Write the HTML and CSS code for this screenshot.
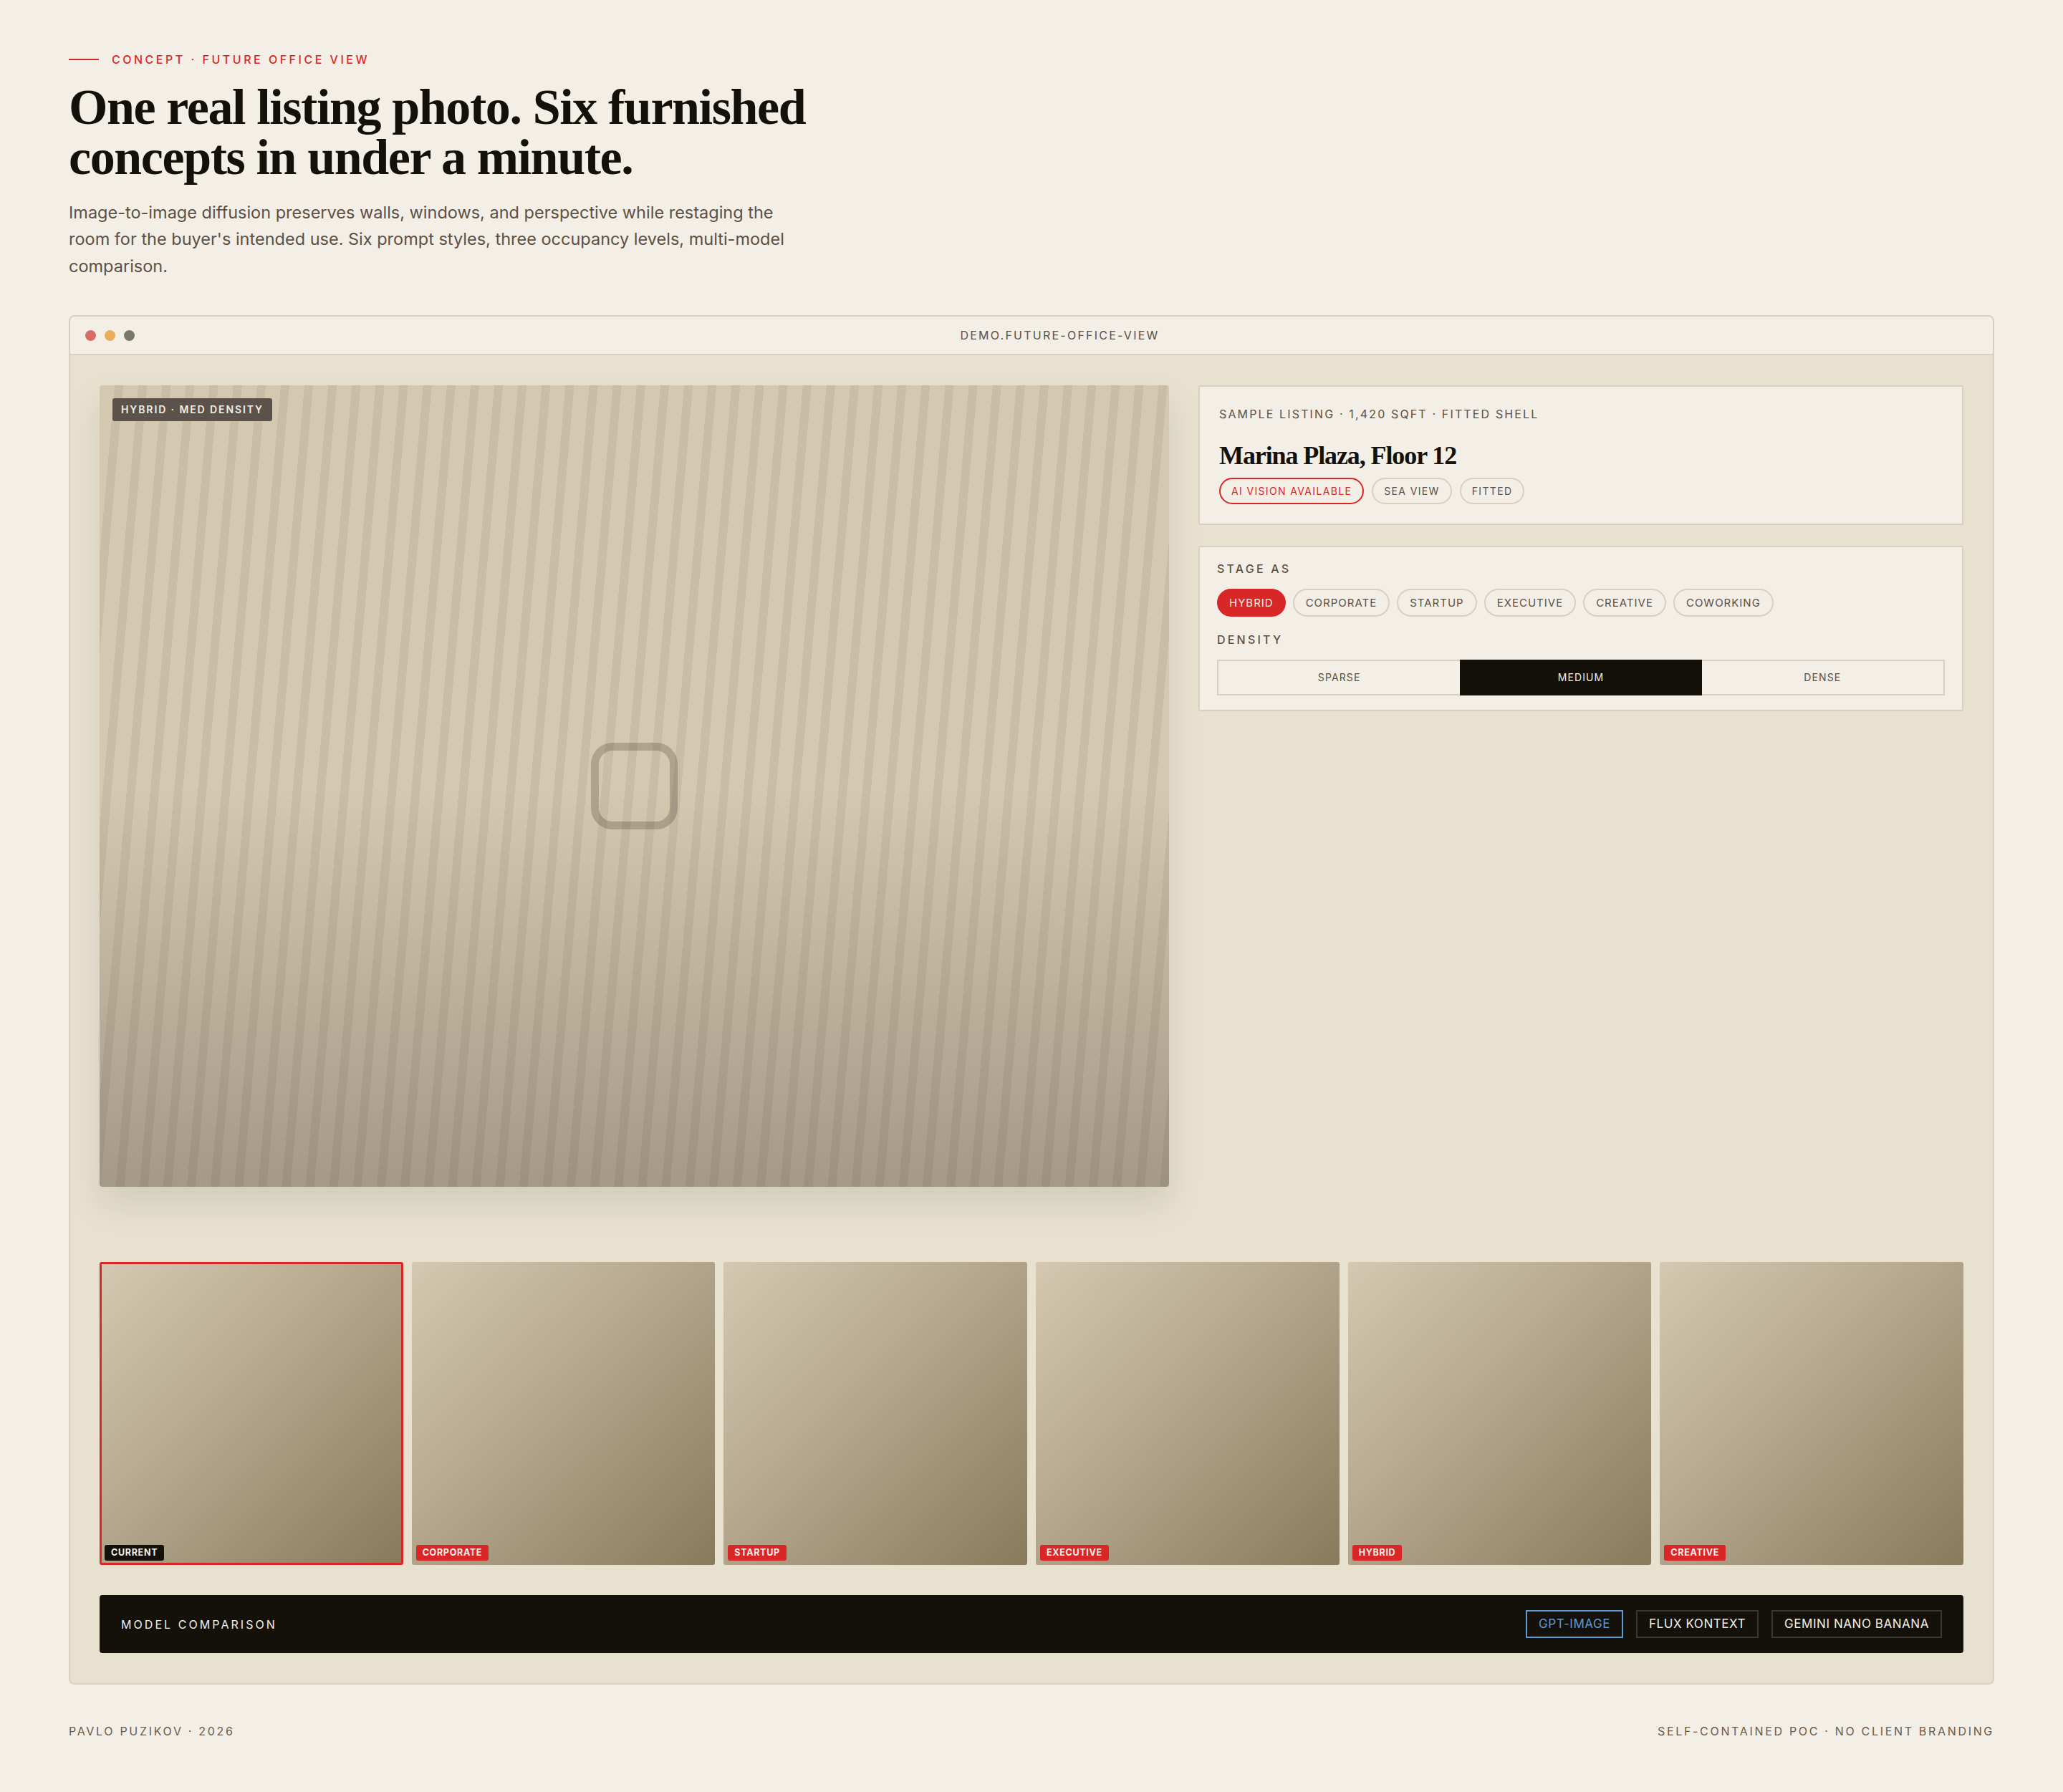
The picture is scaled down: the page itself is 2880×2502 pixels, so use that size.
FILE: index.html
```html
<!DOCTYPE html>
<html lang="en">
<head>
    <meta charset="UTF-8">
    <meta name="viewport" content="width=device-width, initial-scale=1.0">
    <title>Future Office View</title>
    <link rel="stylesheet" href="styles.css">
</head>
<body>

<div class="page">
    <header class="intro">
        <div class="eyebrow"><span class="eyebrow-line"></span>CONCEPT · FUTURE OFFICE VIEW</div>
        <h1>One real listing photo. Six furnished<br>concepts in under a minute.</h1>
        <p class="lead">Image-to-image diffusion preserves walls, windows, and perspective while restaging the room for the buyer's intended use. Six prompt styles, three occupancy levels, multi-model comparison.</p>
    </header>

    <section class="frame">
        <div class="titlebar">
            <div class="dots">
                <span class="dot dot-red"></span>
                <span class="dot dot-amber"></span>
                <span class="dot dot-grey"></span>
            </div>
            <div class="titlebar-url">DEMO.FUTURE-OFFICE-VIEW</div>
        </div>

        <div class="frame-body">
            <div class="stage">
                <div class="photo">
                    <span class="photo-badge">HYBRID · MED DENSITY</span>
                    <span class="photo-icon"></span>
                </div>

                <div class="side">
                    <div class="card listing">
                        <div class="listing-meta">SAMPLE LISTING · 1,420 SQFT · FITTED SHELL</div>
                        <h3>Marina Plaza, Floor 12</h3>
                        <div class="tags">
                            <span class="tag tag-red">AI VISION AVAILABLE</span>
                            <span class="tag">SEA VIEW</span>
                            <span class="tag">FITTED</span>
                        </div>
                    </div>

                    <div class="card controls">
                        <div class="control-label">STAGE AS</div>
                        <div class="chips">
                            <span class="chip chip-active">HYBRID</span>
                            <span class="chip">CORPORATE</span>
                            <span class="chip">STARTUP</span>
                            <span class="chip">EXECUTIVE</span>
                            <span class="chip">CREATIVE</span>
                            <span class="chip">COWORKING</span>
                        </div>
                        <div class="control-label density-label">DENSITY</div>
                        <div class="segments">
                            <span class="segment">SPARSE</span>
                            <span class="segment segment-active">MEDIUM</span>
                            <span class="segment">DENSE</span>
                        </div>
                    </div>
                </div>
            </div>

            <div class="thumbs">
                <div class="thumb thumb-current"><span class="thumb-label label-dark">CURRENT</span></div>
                <div class="thumb"><span class="thumb-label">CORPORATE</span></div>
                <div class="thumb"><span class="thumb-label">STARTUP</span></div>
                <div class="thumb"><span class="thumb-label">EXECUTIVE</span></div>
                <div class="thumb"><span class="thumb-label">HYBRID</span></div>
                <div class="thumb"><span class="thumb-label">CREATIVE</span></div>
            </div>

            <div class="models">
                <div class="models-title">MODEL COMPARISON</div>
                <div class="model-buttons">
                    <span class="model model-active">GPT-IMAGE</span>
                    <span class="model">FLUX KONTEXT</span>
                    <span class="model">GEMINI NANO BANANA</span>
                </div>
            </div>
        </div>
    </section>

    <footer>
        <span>PAVLO PUZIKOV · 2026</span>
        <span>SELF-CONTAINED POC · NO CLIENT BRANDING</span>
    </footer>
</div>

</body>
</html>
```

FILE: styles.css
```css
body {
    margin: 0;
    background: #f3eee6;
    color: #14100a;
    font-family: 'Inter', sans-serif;
}
.page {
    padding: 72px 96px 0;
}
.eyebrow {
    display: flex;
    align-items: center;
    gap: 18px;
    height: 22px;
    font-size: 16px;
    font-weight: 500;
    letter-spacing: 3.5px;
    color: #d92626;
}
.eyebrow-line {
    width: 42px;
    height: 2px;
    background: #d92626;
}
h1 {
    margin: 21px 0 0;
    font-family: 'Liberation Serif', serif;
    font-size: 70px;
    line-height: 70px;
    font-weight: 700;
    letter-spacing: -0.02em;
}
.lead {
    margin: 23px 0 0;
    width: 1010px;
    font-size: 23.5px;
    line-height: 37.4px;
    color: #5c5044;
}
.frame {
    margin-top: 50px;
    border: 2px solid #d9d0c0;
    border-radius: 8px;
    background: #e8e1d0;
}
.titlebar {
    display: flex;
    align-items: center;
    gap: 10px;
    height: 52px;
    padding: 0 21px;
    background: #f3eee6;
    border-bottom: 2px solid #d9d0c0;
    border-radius: 6px 6px 0 0;
}
.dots {
    display: flex;
    gap: 12px;
}
.dot {
    width: 15px;
    height: 15px;
    border-radius: 50%;
}
.dot-red { background: #d96b66; }
.dot-amber { background: #e8ae5c; }
.dot-grey { background: #7a7868; }
.titlebar-url {
    flex: 1;
    text-align: center;
    font-size: 16px;
    letter-spacing: 0.14em;
    color: #5c5044;
}
.frame-body {
    padding: 42px 41px;
}
.stage {
    display: grid;
    grid-template-columns: 1fr 1068px;
    gap: 41px;
    height: 1182px;
    margin-bottom: 42px;
}
.photo {
    position: relative;
    display: flex;
    align-items: center;
    justify-content: center;
    height: 1119px;
    border-radius: 4px;
    background:
        linear-gradient(180deg, rgba(20, 16, 10, 0) 50%, rgba(20, 16, 10, 0.25) 100%),
        repeating-linear-gradient(95deg, #d4c8b0 0, #d4c8b0 21px, #c9bda5 21px, #c9bda5 33px);
    box-shadow: 0 24px 48px rgba(20, 16, 10, 0.1);
}
.photo-badge {
    position: absolute;
    left: 18px;
    top: 18px;
    height: 32px;
    line-height: 32px;
    padding: 0 12px;
    border-radius: 3px;
    background: #5c524c;
    color: #f3eee6;
    font-size: 14px;
    font-weight: 600;
    letter-spacing: 1.9px;
}
.photo-icon {
    width: 99px;
    height: 99px;
    border: 11px solid rgba(20, 16, 10, 0.2);
    border-radius: 30px;
}
.side {
    display: flex;
    flex-direction: column;
    align-items: stretch;
    gap: 29px;
}
.card {
    background: #f3eee6;
    border: 2px solid #d9d0c0;
    border-radius: 2px;
}
.listing {
    padding: 27px 26px 27px 27px;
}
.listing-meta {
    font-size: 16px;
    line-height: 22px;
    letter-spacing: 2.14px;
    color: #5c5044;
}
.listing h3 {
    margin: 25px 0 0;
    font-family: 'Liberation Serif', serif;
    font-size: 36px;
    line-height: 44px;
    font-weight: 700;
    letter-spacing: -1.1px;
}
.tags {
    display: flex;
    gap: 11px;
    margin-top: 9px;
}
.tag {
    height: 33px;
    line-height: 33px;
    padding: 0 15px;
    border: 2px solid #d9d0c0;
    border-radius: 19px;
    font-size: 14px;
    letter-spacing: 1.35px;
    color: #5c5044;
}
.tag-red {
    border-color: #d92626;
    color: #d92626;
}
.controls {
    padding: 19px 24px 20px;
}
.control-label {
    font-size: 16px;
    line-height: 22px;
    font-weight: 500;
    letter-spacing: 0.2em;
    color: #5c5044;
}
.chips {
    display: flex;
    gap: 10px;
    margin-top: 17px;
}
.chip {
    height: 35px;
    line-height: 35px;
    padding: 0 16px;
    border: 2px solid #d9d0c0;
    border-radius: 20px;
    font-size: 15px;
    letter-spacing: 1px;
    color: #5c5044;
}
.chip-active {
    padding: 0 15px;
    background: #d92626;
    border-color: #d92626;
    color: #f3eee6;
}
.density-label {
    margin-top: 21px;
}
.segments {
    display: grid;
    grid-template-columns: 1fr 1fr 1fr;
    margin-top: 17px;
    border: 2px solid #d9d0c0;
}
.segment {
    height: 46px;
    line-height: 46px;
    text-align: center;
    font-size: 14px;
    letter-spacing: 0.08em;
    color: #5c5044;
}
.segment-active {
    margin: -2px 0;
    height: 50px;
    line-height: 50px;
    background: #14100a;
    color: #f3eee6;
}
.thumbs {
    display: grid;
    grid-template-columns: repeat(6, 1fr);
    gap: 12px;
}
.thumb {
    position: relative;
    box-sizing: border-box;
    height: 423px;
    border-radius: 3px;
    background: linear-gradient(135deg, #d4c8b0 0%, #b8ab92 40%, #8a7a5c 100%);
}
.thumb-current {
    border: 3px solid #d92626;
}
.thumb-label {
    position: absolute;
    left: 6px;
    bottom: 6px;
    height: 22px;
    line-height: 22px;
    padding: 0 9px;
    border-radius: 3px;
    background: #d92626;
    color: #f3eee6;
    font-size: 12.5px;
    font-weight: 700;
    letter-spacing: 0.7px;
}
.thumb-current .thumb-label {
    left: 4px;
    bottom: 3px;
}
.label-dark {
    background: #14100a;
}
.models {
    display: flex;
    align-items: center;
    justify-content: space-between;
    height: 81px;
    margin-top: 42px;
    padding: 0 30px;
    border-radius: 4px;
    background: #14100a;
}
.models-title {
    font-size: 16px;
    letter-spacing: 3.06px;
    color: #f3eee6;
}
.model-buttons {
    display: flex;
    gap: 18px;
}
.model {
    height: 35px;
    line-height: 35px;
    padding: 0 16px;
    border: 2px solid #3a3631;
    font-size: 17px;
    letter-spacing: 0.55px;
    color: #f3eee6;
}
.model-active {
    border-color: #5f9ad0;
    color: #5f9ad0;
}
footer {
    display: flex;
    justify-content: space-between;
    margin-top: 54px;
    font-size: 16px;
    line-height: 22px;
    letter-spacing: 2.68px;
    color: #6b5a48;
}
```
